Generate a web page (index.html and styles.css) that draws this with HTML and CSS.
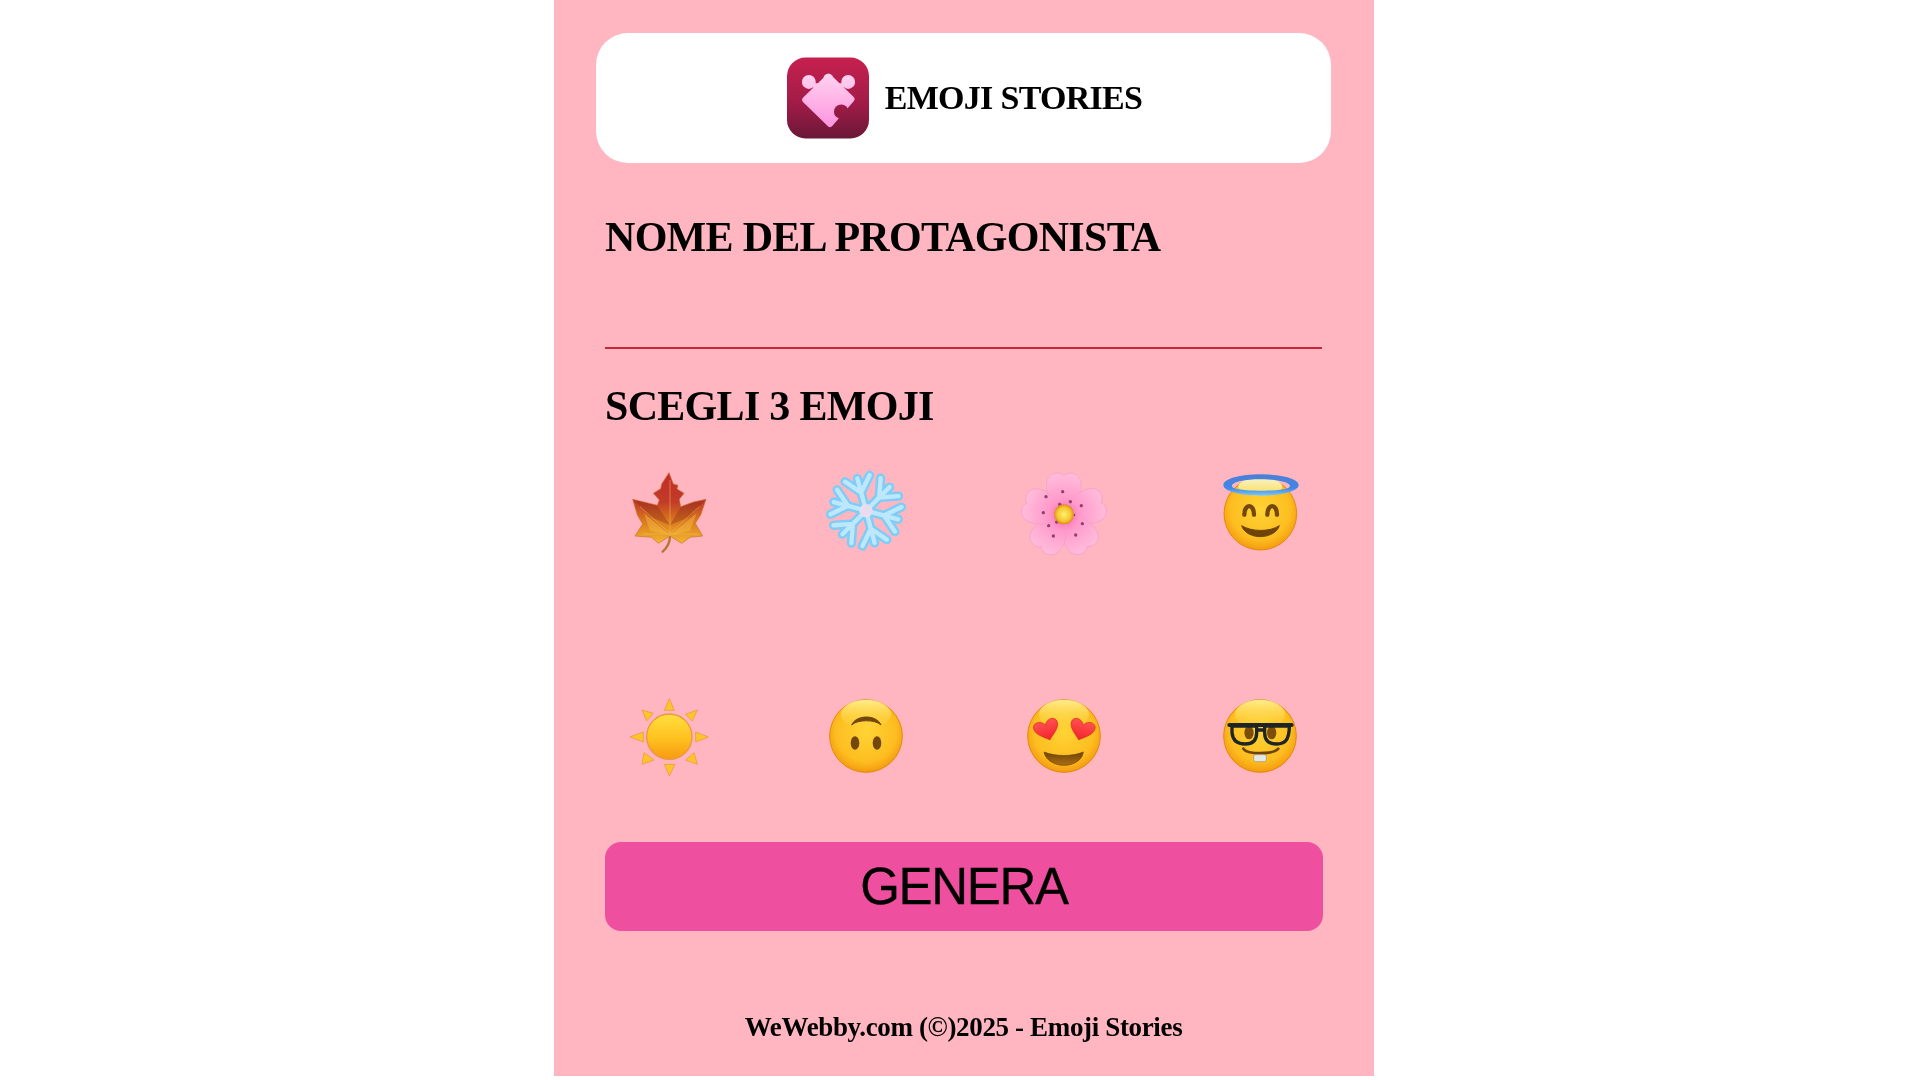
FILE: index.html
```html
<!DOCTYPE html>
<html lang="it">
<head>
<meta charset="utf-8">
<title>Emoji Stories</title>
<link rel="stylesheet" href="styles.css">
</head>
<body>
<svg class="defs" aria-hidden="true">
  <defs>
    <linearGradient id="bgG" gradientUnits="userSpaceOnUse" x1="0" y1="22" x2="0" y2="267"><stop offset="0" stop-color="#c7204f"/><stop offset=".55" stop-color="#a31c48"/><stop offset="1" stop-color="#6a1736"/></linearGradient>
    <linearGradient id="pieceG" gradientUnits="userSpaceOnUse" x1="0" y1="70" x2="0" y2="235"><stop offset="0" stop-color="#ffd3f0"/><stop offset="1" stop-color="#ff93de"/></linearGradient>
    <radialGradient id="faceG" cx=".5" cy=".44" r=".58"><stop offset="0" stop-color="#ffd335"/><stop offset=".72" stop-color="#fdbd20"/><stop offset=".93" stop-color="#f5a011"/><stop offset="1" stop-color="#e58a0c"/></radialGradient>
    <linearGradient id="shineG" x1="0" y1="0" x2="0" y2="1"><stop offset="0" stop-color="#fff6a0" stop-opacity=".85"/><stop offset="1" stop-color="#ffe050" stop-opacity="0"/></linearGradient>
    <linearGradient id="domeG" x1="0" y1="0" x2="0" y2="1"><stop offset="0" stop-color="#f6f4cc"/><stop offset="1" stop-color="#ffdc52"/></linearGradient>
    <linearGradient id="leafG" gradientUnits="userSpaceOnUse" x1="0" y1="38" x2="0" y2="250"><stop offset="0" stop-color="#c32a2c"/><stop offset=".42" stop-color="#c23c28"/><stop offset=".66" stop-color="#d8741e"/><stop offset="1" stop-color="#f3b52c"/></linearGradient>
    <radialGradient id="petalG" gradientUnits="userSpaceOnUse" cx="150" cy="165" r="125"><stop offset="0" stop-color="#f65fa4"/><stop offset=".38" stop-color="#ff9acb"/><stop offset="1" stop-color="#ffbcdb"/></radialGradient>
    <radialGradient id="coreG"><stop offset="0" stop-color="#fff070"/><stop offset=".7" stop-color="#f6c52e"/><stop offset="1" stop-color="#d98a1a"/></radialGradient>
    <linearGradient id="sunG" x1="0" y1="0" x2="0" y2="1"><stop offset="0" stop-color="#ffdf3e"/><stop offset=".55" stop-color="#ffc01f"/><stop offset="1" stop-color="#f79a12"/></linearGradient>
    <linearGradient id="heartG" x1="0" y1="0" x2="0" y2="1"><stop offset="0" stop-color="#ff5252"/><stop offset="1" stop-color="#f2222c"/></linearGradient>
    <linearGradient id="mouthG" x1="0" y1="0" x2="0" y2="1"><stop offset="0" stop-color="#6f4306"/><stop offset="1" stop-color="#ab6f12"/></linearGradient>
    <linearGradient id="haloG" x1="0" y1="0" x2="0" y2="1"><stop offset="0" stop-color="#4f7fd4"/><stop offset=".65" stop-color="#3f86ea"/><stop offset="1" stop-color="#7cc8f2"/></linearGradient>
    <g id="face">
      <circle cx="150" cy="150" r="109" fill="url(#faceG)" stroke="#e3890c" stroke-width="3"/>
      <ellipse cx="150" cy="85" rx="75" ry="44" fill="url(#shineG)"/>
    </g>
    <path id="heart" d="M0 30C-10 19-37 5-37-15-37-33-12-37 0-17 12-37 37-33 37-15 37 5 10 19 0 30Z" fill="url(#heartG)" stroke="#d8301c" stroke-width="2"/>
    <path id="petal" d="M150 165C112 140 88 90 101 58 112 35 140 35 149 48 158 35 187 35 198 58 210 90 188 140 150 165Z" fill="url(#petalG)" stroke="#f39cc6" stroke-width="2"/>
    <g id="arm" fill="none" stroke-linecap="round"><path d="M150 152V52M150 96 112 52M150 96 188 52"/></g>
    <g id="flake">
      <use href="#arm" transform="rotate(-15 150 152)"/><use href="#arm" transform="rotate(45 150 152)"/><use href="#arm" transform="rotate(105 150 152)"/><use href="#arm" transform="rotate(165 150 152)"/><use href="#arm" transform="rotate(225 150 152)"/><use href="#arm" transform="rotate(285 150 152)"/>
    </g>
  </defs>
</svg>
<main class="panel">
  <header class="brand">
    <svg class="logo" viewBox="20 22 248 245" aria-hidden="true">
      <rect x="20" y="22" width="248" height="245" rx="56" fill="url(#bgG)"/>
      <g fill="url(#pieceG)">
        <path d="M146 82 214 148 150 222 76 150Z" stroke="url(#pieceG)" stroke-width="20" stroke-linejoin="round"/>
        <circle cx="86" cy="96" r="21"/>
        <circle cx="205" cy="96" r="21"/>
        <circle cx="145" cy="86" r="15"/>
        <path d="M90 100 200 100 170 140 120 140Z"/>
      </g>
      <circle cx="184" cy="186" r="22" fill="url(#bgG)"/>
    </svg>
    <h1 class="brand-title">EMOJI STORIES</h1>
  </header>

  <h2 class="label">NOME DEL PROTAGONISTA</h2>
  <div class="name-input"></div>
  <h2 class="label label-emoji">SCEGLI 3 EMOJI</h2>

  <div class="emoji-grid">
    <svg class="emoji" viewBox="-6 0 300 300" role="img" aria-label="foglia d'acero">
      <path d="M150 228Q150 255 128 275" fill="none" stroke="#b5762a" stroke-width="7" stroke-linecap="round"/>
      <path d="M147 38 160 72 174 76 171 87 192 100 178 118 182 140 220 126 258 118 242 165 226 190 248 228 210 232 185 250 150 228 115 250 95 232 45 228 68 192 52 165 38 118 80 128 112 136 118 120 100 100 122 86 125 72Z" fill="url(#leafG)" stroke="#c9702a" stroke-width="2" stroke-linejoin="round"/>
      <path d="M40 120 80 129 112 137 150 195 90 170ZM256 120 220 128 182 141 150 195 210 170Z" fill="#7d2616" opacity=".32"/>
      <path d="M150 226 72 160 90 212ZM150 226 230 160 210 212Z" fill="#f8c848" opacity=".4"/>
      <path d="M150 228V60M150 220 60 140M150 220 238 140M150 222 70 222M150 222 232 222" fill="none" stroke="#f4bd5c" stroke-width="2.5" opacity=".6"/>
    </svg>
    <svg class="emoji" viewBox="-3 0 300 300" role="img" aria-label="fiocco di neve">
      <use href="#flake" stroke="#7fcdf6" stroke-width="28"/>
      <use href="#flake" stroke="#bde8fb" stroke-width="13"/>
      <circle cx="150" cy="152" r="20" fill="#e8dcee"/>
    </svg>
    <svg class="emoji" viewBox="-3 0 300 300" role="img" aria-label="fiore di ciliegio">
      <use href="#petal"/><use href="#petal" transform="rotate(72 150 165)"/><use href="#petal" transform="rotate(144 150 165)"/><use href="#petal" transform="rotate(216 150 165)"/><use href="#petal" transform="rotate(288 150 165)"/>
      <g fill="#8f3f70"><circle cx="146" cy="95" r="5"/><circle cx="96" cy="110" r="5"/><circle cx="88" cy="158" r="5"/><circle cx="104" cy="197" r="5"/><circle cx="118" cy="228" r="5"/><circle cx="185" cy="225" r="5"/><circle cx="205" cy="191" r="5"/><circle cx="202" cy="137" r="5"/><circle cx="169" cy="125" r="5"/><circle cx="137" cy="133" r="5"/><circle cx="128" cy="186" r="5"/><circle cx="180" cy="165" r="4"/></g>
      <circle cx="150" cy="163" r="30" fill="url(#coreG)"/>
    </svg>
    <svg class="emoji" viewBox="0 0 300 300" role="img" aria-label="faccina con aureola">
      <circle cx="151" cy="161" r="109" fill="url(#faceG)" stroke="#e3890c" stroke-width="3"/>
      <ellipse cx="151" cy="80" rx="66" ry="27" fill="url(#domeG)"/>
      <path d="M40 75C40 57 90 43 153 43 216 43 266 57 266 75 266 93 216 107 153 107 90 107 40 93 40 75ZM66 78C66 88 105 92 153 92 201 92 240 88 240 78 240 66 201 58 153 58 105 58 66 66 66 78Z" fill="url(#haloG)" fill-rule="evenodd"/>
      <path d="M103 164C103 130 132 130 132 164M172 164C172 130 201 130 201 164" fill="none" stroke="#74480c" stroke-width="13" stroke-linecap="round"/>
      <path d="M95 197C125 216 180 216 208 197 202 218 175 230 151 230 127 230 101 218 95 197Z" fill="#6f4408" stroke="#6f4408" stroke-width="3" stroke-linejoin="round"/>
    </svg>
    <svg class="emoji" viewBox="-6 0 300 300" role="img" aria-label="sole">
      <g fill="#fdc52a" stroke="#f0a048" stroke-width="3" stroke-linejoin="round">
        <path d="M148 38 133 73H163ZM148 270 133 235H165ZM30 153 70 138V168ZM265 153 227 138V168ZM66 72 100 82 80 105ZM232 72 197 85 217 105ZM66 235 72 200 102 222ZM232 235 197 222 222 200Z"/>
      </g>
      <circle cx="148" cy="152" r="68" fill="url(#sunG)" stroke="#ee9640" stroke-width="4"/>
    </svg>
    <svg class="emoji" viewBox="-3 0 300 300" role="img" aria-label="faccina sottosopra">
      <use href="#face"/>
      <path d="M107 117C120 85 182 85 195 117 178 100 124 100 107 117Z" fill="#74480c" stroke="#74480c" stroke-width="3" stroke-linejoin="round"/>
      <ellipse cx="117" cy="171" rx="13" ry="20" fill="#74480c"/>
      <ellipse cx="183" cy="171" rx="13" ry="20" fill="#74480c"/>
    </svg>
    <svg class="emoji" viewBox="-3 0 300 300" role="img" aria-label="faccina con occhi a cuore">
      <use href="#face"/>
      <use href="#heart" transform="translate(99 133) rotate(-17)"/>
      <use href="#heart" transform="translate(203 133) rotate(17)"/>
      <path d="M90 198C125 212 175 212 208 198 205 225 175 238 150 238 125 238 95 225 90 198Z" fill="url(#mouthG)" stroke="#6f4306" stroke-width="2" stroke-linejoin="round"/>
    </svg>
    <svg class="emoji" viewBox="0 0 300 300" role="img" aria-label="faccina nerd">
      <use href="#face"/>
      <ellipse cx="117" cy="140" rx="14" ry="20" fill="#7d4e0a"/>
      <ellipse cx="185" cy="140" rx="14" ry="20" fill="#7d4e0a"/>
      <path d="M58 117H245" fill="none" stroke="#1e2526" stroke-width="12" stroke-linecap="round"/>
      <path d="M66 120H140V140C140 162 128 174 105 174 82 174 68 162 66 140ZM164 120H238C238 162 225 174 200 174 176 174 164 162 164 140ZM140 132H164" fill="none" stroke="#1e2526" stroke-width="10" stroke-linejoin="round" stroke-linecap="round"/>
      <path d="M100 188C112 206 190 206 205 188" fill="none" stroke="#6f4408" stroke-width="8" stroke-linecap="round"/>
      <rect x="131" y="206" width="38" height="21" rx="6" fill="#e6e8e6" stroke="#9a8f70" stroke-width="2"/>
    </svg>
  </div>

  <button class="generate" type="button">GENERA</button>
  <footer class="credits">WeWebby.com (©)2025 - Emoji Stories</footer>
</main>
</body>
</html>
```

FILE: styles.css
```css
html, body {
  margin: 0;
  padding: 0;
  background: #fff;
}
body {
  padding-left: 8px;
  height: 1080px;
  overflow: hidden;
  font-family: "Liberation Serif", serif;
  color: #000;
}
.defs {
  position: absolute;
  width: 0;
  height: 0;
}
.panel {
  box-sizing: border-box;
  width: 820px;
  height: 1076px;
  margin: 0 auto;
  padding: 33px 43px 0 42px;
  background: #ffb6c1;
  display: flex;
  flex-direction: column;
  filter: blur(.4px);
}
.brand {
  box-sizing: border-box;
  height: 130px;
  padding-left: 2px;
  background: #fff;
  border-radius: 32px;
  display: flex;
  align-items: center;
  justify-content: center;
  gap: 16px;
}
.logo {
  width: 82px;
  height: 82px;
  flex: none;
}
.brand-title {
  margin: 0;
  font-size: 34px;
  font-weight: 700;
  line-height: 1;
  letter-spacing: -.7px;
}
.label {
  margin: 49.5px 9px 0;
  font-size: 42px;
  font-weight: 700;
  line-height: 48px;
  letter-spacing: -.7px;
}
.name-input {
  height: 86px;
  margin: 0 9px;
  border-bottom: 2px solid #c2283f;
}
.label-emoji {
  margin-top: 33px;
}
.emoji-grid {
  margin: 30.5px 8px 0 9px;
  display: grid;
  grid-template-columns: repeat(4, 126px);
  justify-content: space-between;
  justify-items: center;
  row-gap: 126px;
}
.emoji {
  display: block;
  width: 100px;
  height: 100px;
  filter: blur(.3px);
}
.generate {
  height: 89px;
  margin: 56px 8px 0 9px;
  border: 0;
  border-radius: 16px;
  background: #ee4f9f;
  color: #000;
  font-family: "Liberation Sans", sans-serif;
  font-size: 51px;
  letter-spacing: -1.3px;
  padding: 0;
  -webkit-text-stroke: .3px #000;
}
.credits {
  margin-top: 80.5px;
  font-size: 27px;
  font-weight: 700;
  letter-spacing: -.35px;
  text-align: center;
}
```
